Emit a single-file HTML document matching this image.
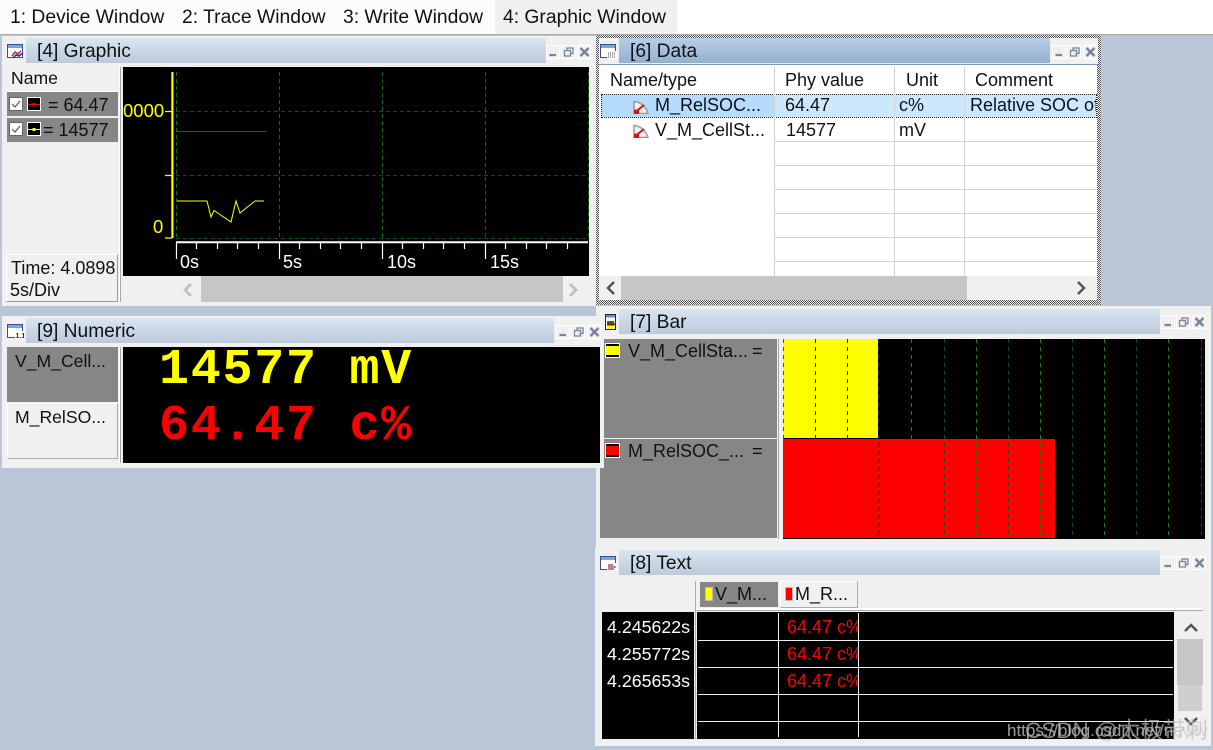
<!DOCTYPE html>
<html><head><meta charset="utf-8"><style>
html,body{margin:0;padding:0}
body{width:1213px;height:750px;overflow:hidden;position:relative;background:#b9c6d8;font-family:"Liberation Sans","Noto Sans CJK SC",sans-serif;font-size:18px;color:#111}
div,span,svg{position:absolute}
.t{white-space:nowrap;line-height:20px}
.tab{top:8px;font-size:19.300px;color:#111;white-space:nowrap;line-height:20px}
.win{background:#f0f0f0}
.ti{height:25px;background:linear-gradient(#d8e5f2,#bccadb)}
.ta{height:25px;background:linear-gradient(#b6cfe8,#93b0cf)}
.tt{font-size:19.200px;line-height:24px;white-space:nowrap;color:#111;margin-top:2px}
.g{background:#868686}
.bk{background:#000}
.w{color:#fff}
.r{color:#f00}
.num{white-space:nowrap;font:bold 50px/52px "Liberation Mono",monospace;letter-spacing:1.750px}
</style></head><body>
<svg width="0" height="0" style="left:0;top:0"><defs>
<symbol id="b" viewBox="0 0 50 14"><rect x=".5" y=".5" width="13" height="13" fill="#f0f0f0" stroke="#fff"/><rect x="15.5" y=".5" width="13" height="13" fill="#f0f0f0" stroke="#fff"/><rect x="31.5" y=".5" width="13" height="13" fill="#f0f0f0" stroke="#fff"/><path d="M3.5 10h6.500" stroke="#76859a" stroke-width="2.200"/><path d="M18.500 5.500h6v5.500h-6zM21 5V3h6v5.500h-2.500" fill="none" stroke="#76859a" stroke-width="1.300"/><path d="M34.500 3l8 8M42.500 3l-8 8" stroke="#76859a" stroke-width="2.400"/></symbol>
<symbol id="wi" viewBox="0 0 17 15"><rect x=".5" y=".5" width="15" height="13" fill="#fff" stroke="#35508f"/><rect x="1" y="1" width="14" height="3" fill="#7aa5e0"/></symbol>
<symbol id="ga" viewBox="0 0 16 14"><path d="M1 13.500V1.500C8 2 13 7 15 13.500z" fill="#f0f0f0" stroke="#999" stroke-width="1.500"/><path d="M3 11.500L11 5" stroke="#d01818" stroke-width="2"/><rect x="1" y="9.500" width="5" height="4.500" fill="#d01818"/></symbol>
</defs></svg>

<!-- Top tab bar -->
<div style="left:0;top:0;width:1213px;height:34px;background:#fff"></div>
<div style="left:0;top:34px;width:1213px;height:1px;background:#aaa"></div>
<div style="left:0;top:0;width:174px;height:33px;background:#fcfcfc"></div>
<div style="left:175px;top:0;width:158px;height:33px;background:#fcfcfc"></div>
<div style="left:334px;top:0;width:160px;height:33px;background:#fcfcfc"></div>
<div style="left:495px;top:0;width:182px;height:34px;background:#f0f0f0"></div>
<div class="tab" style="left:10px">1: Device Window</div>
<div class="tab" style="left:182px">2: Trace Window</div>
<div class="tab" style="left:343px">3: Write Window</div>
<div class="tab" style="left:503px">4: Graphic Window</div>

<!-- Graphic window -->
<div class="win" style="left:2px;top:36px;width:594px;height:270px"></div>
<div class="ti" style="left:26px;top:38px;width:520px"></div>
<div class="tt" style="left:37px;top:38px">[4] Graphic</div>
<svg style="left:7px;top:44px" width="17" height="15"><use href="#wi"/><path d="M5 12l3-4 3 2 3-3" stroke="#c02030" stroke-width="1.500" fill="none"/><path d="M6 14l3-3 3 1 4-3" stroke="#2030a0" stroke-width="1.500" fill="none"/></svg>
<svg style="left:546px;top:45px" width="50" height="14"><use href="#b"/></svg>
<div class="t" style="left:11px;top:68px;font-size:17.600px">Name</div>
<div style="left:7px;top:91px;width:111px;height:1px;background:#fff"></div>
<div class="g" style="left:7px;top:92px;width:111px;height:24px"></div>
<div class="g" style="left:7px;top:118px;width:111px;height:24px"></div>
<svg style="left:9px;top:97px" width="33" height="42">
<rect x=".5" y=".5" width="13" height="13" fill="#fff" stroke="#666"/><path d="M3 7l3 3 5-6" stroke="#555" fill="none" stroke-width="1.200"/>
<rect x="18.500" y=".5" width="13" height="13" fill="#000" stroke="#fff"/><path d="M19 7.500h12" stroke="#f00" stroke-width="1"/><rect x="23.500" y="6" width="3" height="3" fill="#f00"/>
<rect x=".5" y="25.500" width="13" height="13" fill="#fff" stroke="#666"/><path d="M3 32l3 3 5-6" stroke="#555" fill="none" stroke-width="1.200"/>
<rect x="18.500" y="25.500" width="13" height="13" fill="#000" stroke="#fff"/><path d="M19 32.500h12" stroke="#ff0" stroke-width="1"/><rect x="23.500" y="31" width="3" height="3" fill="#ff0"/>
</svg>
<div class="t" style="left:48px;top:95px">= 64.47</div>
<div class="t" style="left:43px;top:120px">= 14577</div>
<div style="left:6px;top:254px;width:110px;height:46px;border:1px solid #fff;border-right-color:#999;border-bottom-color:#999"></div>
<div class="t" style="left:11px;top:258px;font-size:18px">Time: 4.0898</div>
<div class="t" style="left:10px;top:280px;font-size:18px">5s/Div</div>
<div style="left:119px;top:67px;width:1px;height:235px;background:#fff"></div>
<div style="left:120px;top:67px;width:1px;height:235px;background:#a8a8a8"></div>
<div class="bk" style="left:123px;top:67px;width:466px;height:209px"></div>
<svg style="left:123px;top:67px" width="466" height="209">
<g stroke-dasharray="4 3" fill="none"><path d="M53.500 5V172M156.500 5V172M259.500 5V172M362.500 5V172M465.500 5V172" stroke="#0a700a"/><path d="M53 44.500H463M53 108.500H463M53 171.500H463" stroke="#075507"/></g>
<path d="M49.400 5V171" stroke="#ff0" stroke-width="2.200"/>
<path d="M42 44.500h7M42 108.500h7M42 171h7" stroke="#ff0" stroke-width="1.200"/>
<path d="M53 64.500H143" stroke="#c81010"/>
<polyline fill="none" stroke="#ff0" points="54,134 84,134 88,150 91,143.500 108,155 113,134 117,146 132,134 141,134"/>
<path d="M53 175.200H465" stroke="#fff" stroke-width="2"/>
<path d="M73.500 175v7M94.500 175v7M114.500 175v7M135.500 175v7M176.500 175v7M197.500 175v7M217.500 175v7M238.500 175v7M279.500 175v7M300.500 175v7M320.500 175v7M341.500 175v7M382.500 175v7M403.500 175v7M423.500 175v7M444.500 175v7M53.500 175v17M156.500 175v17M259.500 175v17M362.500 175v17" stroke="#fff" stroke-width="1.200"/>
<text x="57" y="201" fill="#fff" font-family="Liberation Sans" font-size="18">0s</text>
<text x="160" y="201" fill="#fff" font-family="Liberation Sans" font-size="18">5s</text>
<text x="264" y="201" fill="#fff" font-family="Liberation Sans" font-size="18">10s</text>
<text x="367" y="201" fill="#fff" font-family="Liberation Sans" font-size="18">15s</text>
<text x="0" y="50" fill="#ff0" font-family="Liberation Sans" font-size="18.500">0000</text>
<text x="30" y="166" fill="#ff0" font-family="Liberation Sans" font-size="18.500">0</text>
</svg>
<div style="left:201px;top:276px;width:362px;height:26px;background:#c6c6c6"></div>
<svg style="left:180px;top:282px" width="400" height="16"><path d="M11 2L5 8l6 6" fill="none" stroke="#c0c0c0" stroke-width="2.800"/><path d="M390 2l6 6-6 6" fill="none" stroke="#c0c0c0" stroke-width="2.800"/></svg>

<!-- Data window -->
<div style="left:596px;top:35px;width:505px;height:270px;background:repeating-conic-gradient(#555 0 25%,#eee 0 50%) 0 0/2px 2px"></div>
<div class="win" style="left:599px;top:38px;width:499px;height:26px"></div>
<div class="ta" style="left:619px;top:38px;width:431px"></div>
<div style="left:599px;top:64px;width:499px;height:1px;background:#7a9cbf"></div>
<div class="tt" style="left:630px;top:38px">[6] Data</div>
<svg style="left:600px;top:44px" width="17" height="15"><use href="#wi"/><rect x="7" y="7" width="10" height="8" fill="#fff"/><path d="M8 9h8M8 11h8M8 13h8" stroke="#555" stroke-dasharray="1 1"/></svg>
<svg style="left:1052px;top:45px" width="50" height="14"><use href="#b"/></svg>
<div style="left:599px;top:65px;width:498px;height:211px;background:#fff"></div>
<div style="left:601px;top:94px;width:173px;height:23px;background:#b5dcff"></div>
<div style="left:774px;top:94px;width:322px;height:23px;background:#cce8ff"></div>
<div style="left:601px;top:94px;width:494px;height:22px;border:1px dotted #222"></div>
<svg style="left:599px;top:65px" width="498" height="211"><path d="M175.500 2V211M295.500 2V211M365.500 2V211" stroke="#d2d2d2"/><path d="M176 76.500H498M176 100.500H498M176 124.500H498M176 148.500H498M176 172.500H498M176 196.500H498" stroke="#d2d2d2"/></svg>
<div class="t" style="left:610px;top:70px">Name/type</div>
<div class="t" style="left:785px;top:70px">Phy value</div>
<div class="t" style="left:906px;top:70px">Unit</div>
<div class="t" style="left:975px;top:70px">Comment</div>
<svg style="left:633px;top:100px" width="16" height="14"><use href="#ga"/></svg>
<svg style="left:633px;top:124px" width="16" height="14"><use href="#ga"/></svg>
<div class="t" style="left:655px;top:95px">M_RelSOC...</div>
<div class="t" style="left:655px;top:120px">V_M_CellSt...</div>
<div class="t" style="left:785px;top:95px">64.47</div>
<div class="t" style="left:786px;top:120px">14577</div>
<div class="t" style="left:899px;top:95px">c%</div>
<div class="t" style="left:899px;top:120px">mV</div>
<div style="left:970px;top:95px;width:126px;height:20px;overflow:hidden;white-space:nowrap;line-height:20px">Relative SOC of</div>
<div style="left:599px;top:276px;width:498px;height:24px;background:#f0f0f0"></div>
<div style="left:621px;top:276px;width:346px;height:24px;background:#c6c6c6"></div>
<svg style="left:604px;top:281px" width="484" height="14"><path d="M10 1L4 7l6 6" fill="none" stroke="#555" stroke-width="2.500"/><path d="M474 1l6 6-6 6" fill="none" stroke="#555" stroke-width="2.500"/></svg>

<!-- Bar window -->
<div class="win" style="left:596px;top:306px;width:615px;height:242px"></div>
<div class="ti" style="left:619px;top:309px;width:541px"></div>
<div class="tt" style="left:630px;top:309px">[7] Bar</div>
<svg style="left:605px;top:314px" width="12" height="16"><rect x=".5" y=".5" width="10" height="15" fill="#fff" stroke="#223"/><rect x="1" y="1" width="9" height="2.500" fill="#5b8fd6"/><rect x="2" y="7" width="7" height="2.500" fill="#1a7a1a"/><rect x="2" y="9.500" width="9" height="2" fill="#a01010"/><rect x="2" y="11.500" width="6" height="3.500" fill="#ff0"/></svg>
<svg style="left:1161px;top:315px" width="50" height="14"><use href="#b"/></svg>
<div class="g" style="left:600px;top:339px;width:177px;height:99px"></div>
<div class="g" style="left:600px;top:439px;width:177px;height:99px"></div>
<div style="left:778px;top:339px;width:1px;height:200px;background:#aaa"></div>
<div class="bk" style="left:783px;top:339px;width:422px;height:200px"></div>
<div style="left:783px;top:339px;width:95px;height:99px;background:#ff0"></div>
<div style="left:783px;top:439px;width:272px;height:99px;background:#f00"></div>
<svg style="left:783px;top:339px" width="422" height="200">
<g stroke-dasharray="4 4" fill="none"><path d="M.5 0V200" stroke="#0a7a0a"/><path d="M32.500 0V200M64.500 0V200M96 0V200" stroke="#0a3a0a"/><path d="M128.500 0V200M193.500 0V200M257.500 0V200M321.500 0V200M385.500 0V200" stroke="#0a8a0a"/><path d="M161.500 0V200M225.500 0V200M289.500 0V200M353.500 0V200M418.500 0V200" stroke="#0a500a"/></g></svg>
<svg style="left:605px;top:343px" width="16" height="120"><rect x=".5" y=".5" width="14" height="14" fill="#000" stroke="#fff"/><rect x="1" y="3" width="13" height="9" fill="#ff0"/><rect x=".5" y="100.500" width="14" height="14" fill="#000" stroke="#fff"/><rect x="1" y="103" width="13" height="9" fill="#f00"/></svg>
<div class="t" style="left:628px;top:341px">V_M_CellSta...</div>
<div class="t" style="left:752px;top:341px">=</div>
<div class="t" style="left:628px;top:441px">M_RelSOC_...</div>
<div class="t" style="left:752px;top:441px">=</div>

<!-- Numeric window -->
<div class="win" style="left:2px;top:316px;width:602px;height:152px"></div>
<div class="ti" style="left:26px;top:318px;width:528px"></div>
<div class="tt" style="left:37px;top:318px">[9] Numeric</div>
<svg style="left:7px;top:324px" width="17" height="15"><use href="#wi"/><rect x="8" y="7" width="9" height="8" fill="#fff"/><text x="8.500" y="14" font-size="7" font-weight="bold" fill="#800" font-family="Liberation Sans">1.1</text></svg>
<svg style="left:556px;top:325px" width="50" height="14"><use href="#b"/></svg>
<div class="g" style="left:7px;top:347px;width:111px;height:55px"></div>
<div style="left:7px;top:403px;width:109px;height:54px;border:1px solid #fff;border-right-color:#aaa;border-bottom-color:#aaa"></div>
<div class="t" style="left:15px;top:351px;font-size:17.600px">V_M_Cell...</div>
<div class="t" style="left:15px;top:407px;font-size:17.600px">M_RelSO...</div>
<div style="left:119px;top:347px;width:1px;height:116px;background:#fff"></div>
<div style="left:120px;top:347px;width:1px;height:116px;background:#a8a8a8"></div>
<div class="bk" style="left:123px;top:347px;width:477px;height:116px"></div>
<div class="num" style="left:159px;top:345px;color:#ff0">14577 mV</div>
<div class="num" style="left:159px;top:401px;color:#f00">64.47 c%</div>

<!-- Text window -->
<div class="win" style="left:595px;top:548px;width:616px;height:198px"></div>
<div class="ti" style="left:619px;top:550px;width:541px"></div>
<div class="tt" style="left:630px;top:550px">[8] Text</div>
<svg style="left:600px;top:556px" width="17" height="15"><use href="#wi"/><rect x="7" y="7" width="10" height="8" fill="#fff"/><path d="M8 9h5M8 11h8M8 13h6" stroke="#800"/></svg>
<svg style="left:1161px;top:556px" width="50" height="14"><use href="#b"/></svg>
<div style="left:695px;top:581px;width:1px;height:158px;background:#aaa"></div>
<div class="g" style="left:700px;top:582px;width:78px;height:25px"></div>
<div style="left:780px;top:581px;width:76px;height:25px;border:1px solid #fff;border-right-color:#aaa;border-bottom-color:#aaa"></div>
<div style="left:705px;top:587px;width:6px;height:12px;background:#ff0;border:1px solid #bbb"></div>
<div style="left:785px;top:587px;width:6px;height:12px;background:#f00;border:1px solid #bbb"></div>
<div class="t" style="left:715px;top:584px">V_M...</div>
<div class="t" style="left:795px;top:584px">M_R...</div>
<div style="left:697px;top:608px;width:506px;height:2px;background:#fff"></div>
<div style="left:697px;top:610px;width:506px;height:1px;background:#aaa"></div>
<div class="bk" style="left:602px;top:612px;width:92px;height:127px"></div>
<div class="bk" style="left:697px;top:612px;width:477px;height:127px"></div>
<svg style="left:697px;top:612px" width="477" height="127"><path d="M1 28.500H476M1 55.500H476M1 82.500H476M1 109.500H476" stroke="#eee"/><path d="M81.500 1V125M161.500 1V125" stroke="#eee"/></svg>
<div class="t w" style="left:607px;top:617px;font-size:17.800px">4.245622s</div>
<div class="t w" style="left:607px;top:644px;font-size:17.800px">4.255772s</div>
<div class="t w" style="left:607px;top:671px;font-size:17.800px">4.265653s</div>
<div class="t r" style="left:787px;top:617px;width:71px;overflow:hidden;font-size:18px">64.47 c%</div>
<div class="t r" style="left:787px;top:644px;width:71px;overflow:hidden;font-size:18px">64.47 c%</div>
<div class="t r" style="left:787px;top:671px;width:71px;overflow:hidden;font-size:18px">64.47 c%</div>
<div style="left:1177px;top:639px;width:26px;height:46px;background:#c6c6c6"></div>
<div style="left:1178px;top:685px;width:24px;height:26px;background:#cfcfcf"></div>
<svg style="left:1184px;top:622px" width="14" height="104"><path d="M1 9l6-6 6 6" fill="none" stroke="#555" stroke-width="2.500"/><path d="M1 96l6 6 6-6" fill="none" stroke="#555" stroke-width="2.500"/></svg>

<!-- Watermark -->
<div class="t" style="left:1007px;top:721px;font-size:17px;color:rgba(210,210,210,.75)">https://blog.csdn.net/neww</div>
<div class="t" style="left:1025px;top:716px;font-size:22.500px;line-height:30px;color:rgba(190,190,190,.7)">CSDN @太极带刺</div>
</body></html>
